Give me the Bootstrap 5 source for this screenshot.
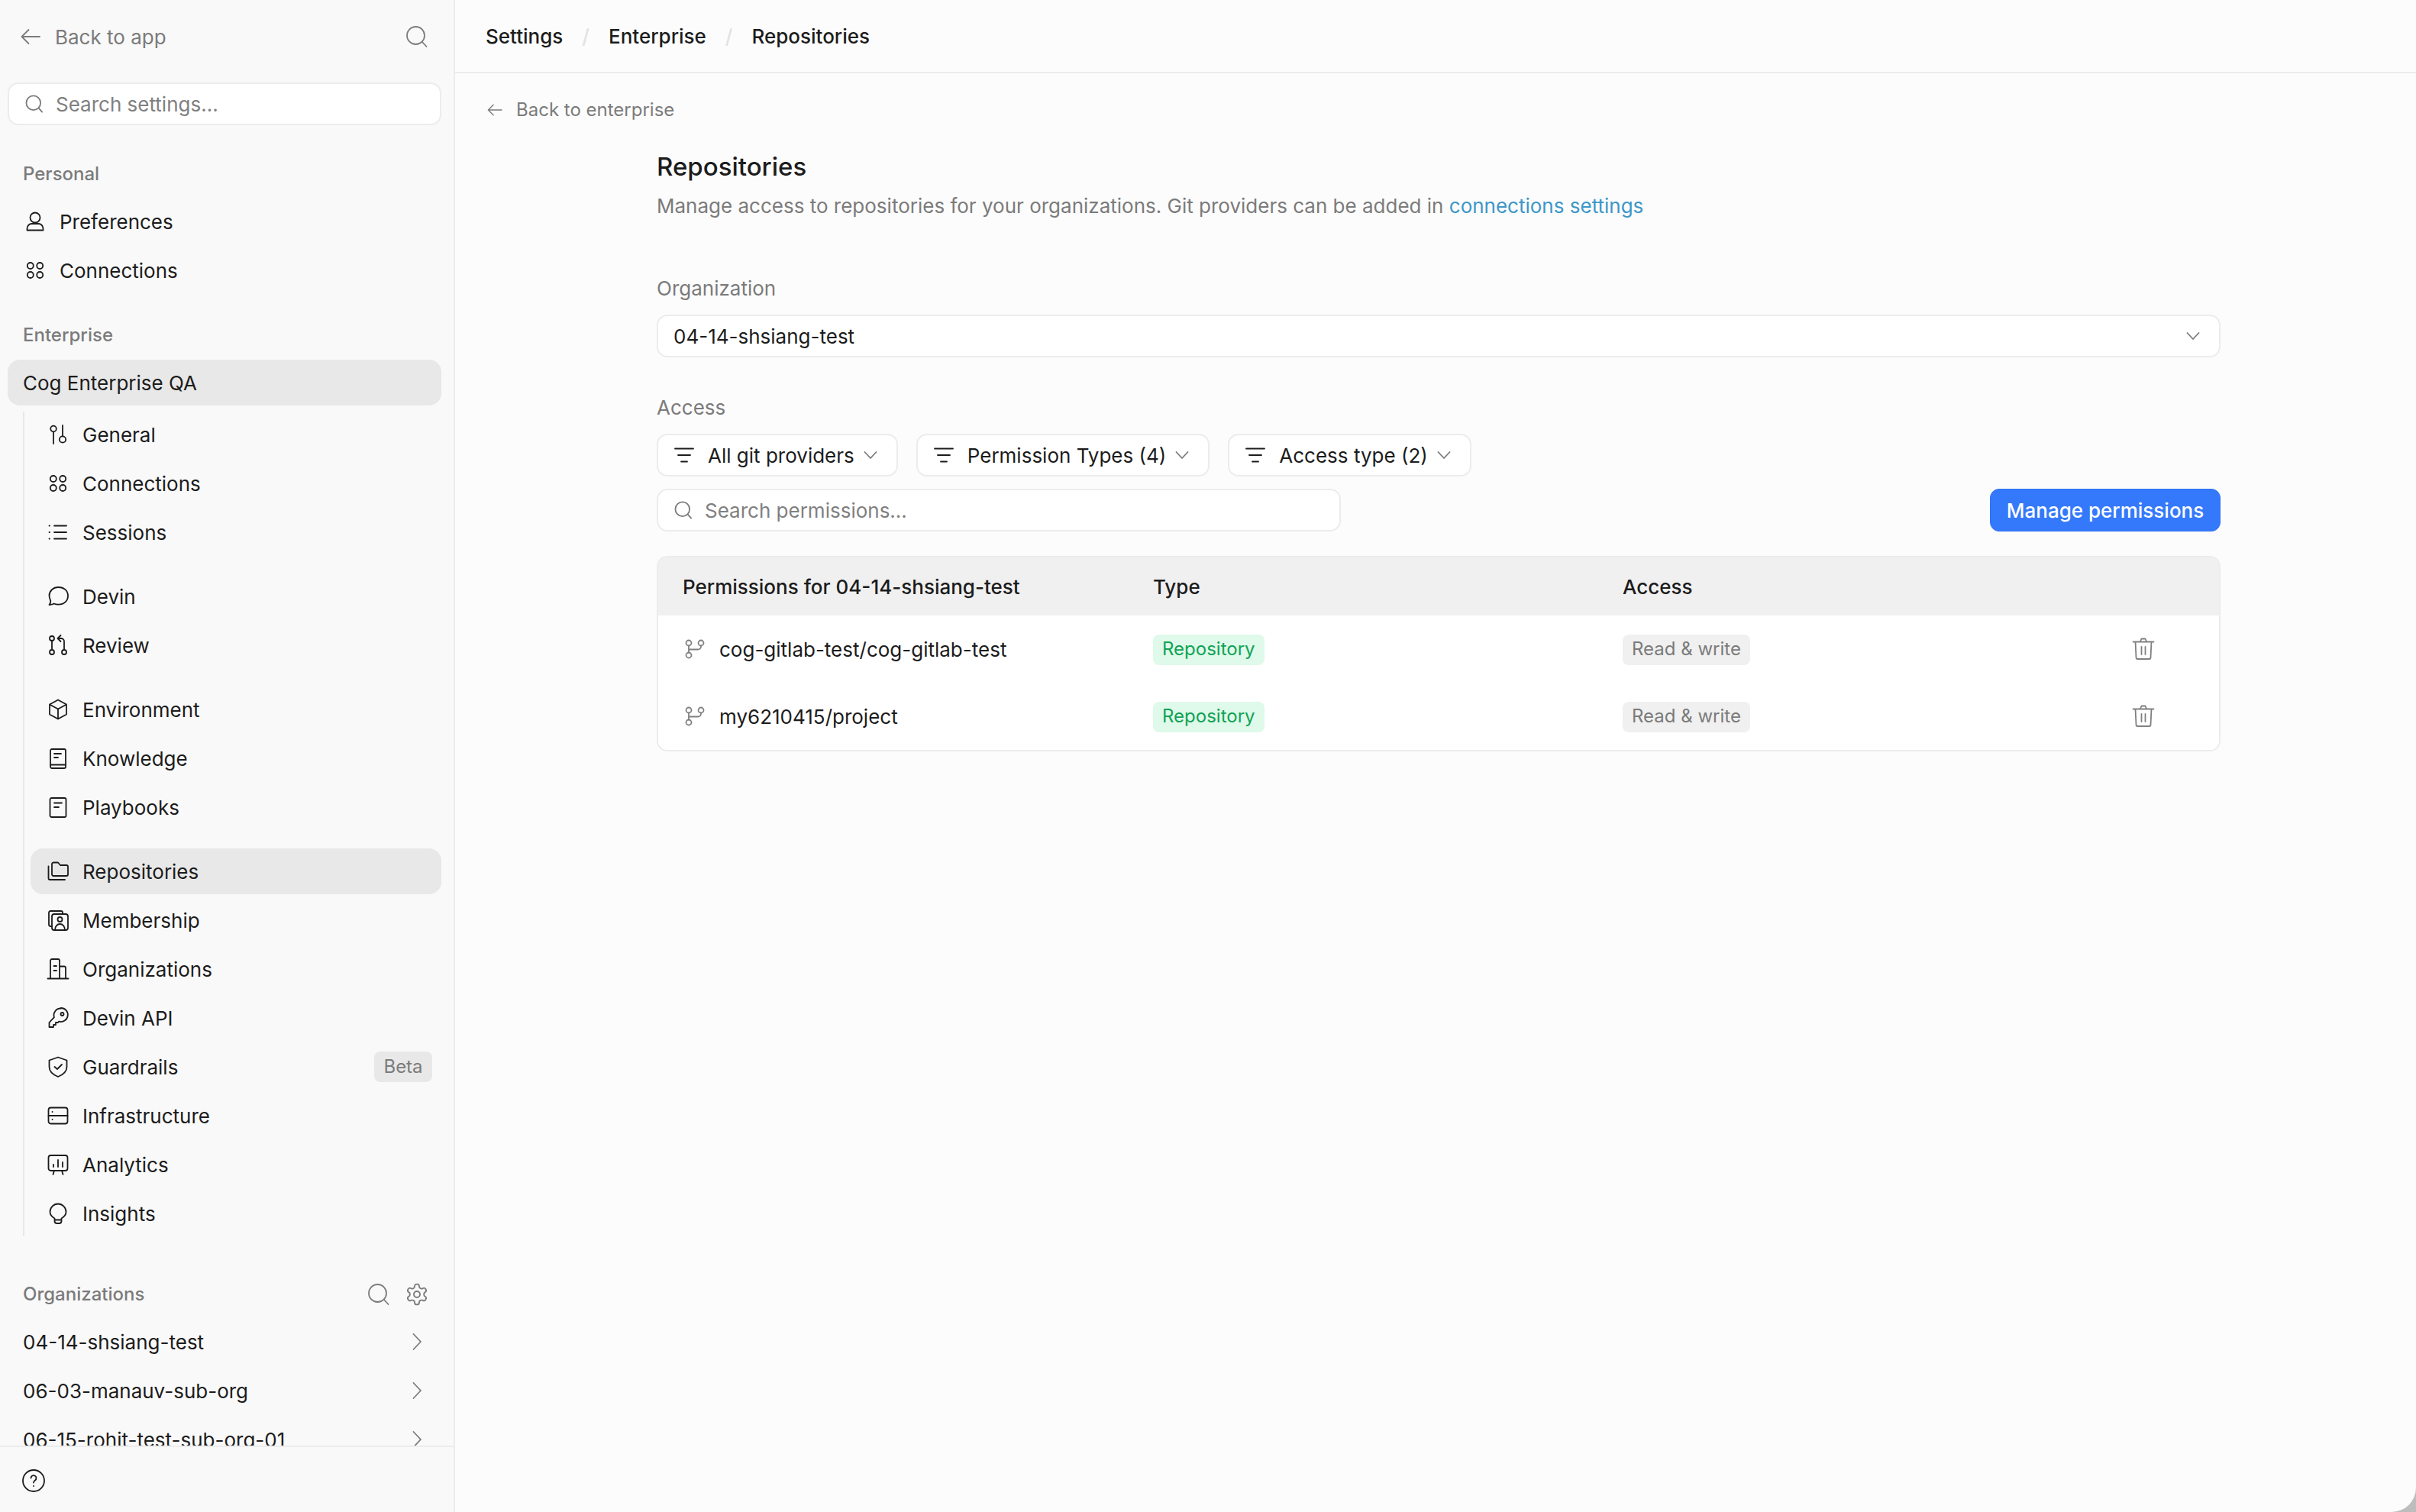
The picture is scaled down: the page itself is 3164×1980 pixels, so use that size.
<!DOCTYPE html>
<html lang="en">
<head>
<meta charset="UTF-8">
<title>Repositories</title>
<link href="https://cdn.jsdelivr.net/npm/bootstrap@5.3.0/dist/css/bootstrap.min.css" rel="stylesheet">
<style>
    body { height: 1980px; background: #bdbdbd; font-family: Inter, "Liberation Sans", sans-serif; font-size: 26px; color: #1c1c1c; }
    svg.ico { width: 32px; height: 32px; flex: none; fill: none; stroke: currentColor; stroke-width: 1.8; stroke-linecap: round; stroke-linejoin: round; }
    svg.ico-sm { width: 24px; height: 24px; }
    svg.ico-find { width: 26px; height: 26px; stroke-width: 2.2; }

    .side-panel { width: 596px; flex: none; background: #f9f9f9; border-right: 2px solid #ececec; }
    .side-scroll { height: 1893px; padding-top: 24px; }
    .side-top { height: 48px; padding: 0 32px 0 24px; color: #7b7b7b; }
    .side-top a { color: #7b7b7b; text-decoration: none; }
    .side-search { margin: 36px 16px 44px 10px; height: 56px; }
    .side-label { height: 40px; padding: 0 32px 0 30px; color: #7b7b7b; font-size: 24px; font-weight: 500; margin-bottom: 12px; }
    .side-item { height: 60px; margin-bottom: 4px; padding-left: 20px; border-radius: 16px; color: #1c1c1c; text-decoration: none; gap: 16px; }
    .side-item.on { background: #e8e8e8; }
    .side-first { margin: 0 16px 35px 10px; }
    .side-first.cog-row { margin-bottom: 0; }
    .side-first.cog-row .side-item { margin-bottom: 8px; }
    .side-nest { margin: 0 16px 56px 30px; border-left: 2px solid #e8e8e8; padding-left: 8px; }
    .side-nest .side-item:last-child { margin-bottom: 0; }
    .group-gap { margin-top: 24px; }
    .beta-tag { margin: 0 12px 0 auto; width: 76px; height: 40px; border-radius: 8px; background: #e8e8e8; color: #7b7b7b; font-size: 24px; }
    .org-tools { gap: 18px; color: #7b7b7b; }
    .org-row { height: 60px; margin-bottom: 4px; padding: 0 32px 0 30px; }
    .org-row svg { color: #7b7b7b; }
    .side-foot { height: 87px; border-top: 2px solid #ececec; padding: 2px 0 0 28px; }

    .main-panel { background: #fcfcfc; border-bottom-right-radius: 32px; min-width: 0; }
    .crumb-bar { height: 96px; padding-left: 40px; border-bottom: 2px solid #ececec; }
    .crumb-bar .breadcrumb { --bs-breadcrumb-margin-bottom: 0; --bs-breadcrumb-item-padding-x: 25px; --bs-breadcrumb-divider-color: #e2e2e2; }
    .crumb-bar .breadcrumb-item, .crumb-bar .breadcrumb-item.active { color: #1c1c1c; font-weight: 500; }
    .back-link { height: 96px; padding-left: 40px; margin-bottom: 2px; gap: 16px; color: #7b7b7b; font-size: 24px; text-decoration: none; }
    .page-body { margin-left: 264px; width: 2048px; }
    .page-title { font-size: 33px; font-weight: 500; line-height: 48px; margin: 0; }
    .page-sub { color: #7b7b7b; line-height: 40px; margin: 8px 0 68px; }
    .page-sub a { color: #3d97c9; text-decoration: none; }
    .field-label { color: #7b7b7b; line-height: 40px; margin-bottom: 14px; }
    .btn.box-btn { height: 56px; background: #fff; border: 2px solid #ececec; border-radius: 14px; color: #1c1c1c; font-size: 26px; padding: 0 22px 0 18px; }
    .btn.box-btn svg.ico-sm { color: #7b7b7b; }
    .org-pick { padding: 0 22px 0 20px !important; margin-bottom: 46px; }
    .filter-row { gap: 24px; margin-bottom: 16px; }
    .filter-btn { gap: 9px; }
    .filter-btn .btn-txt { margin-left: 6px; }
    .search-box { height: 56px; width: 896px; background: #fff; border: 2px solid #ececec; border-radius: 14px; padding-left: 20px; gap: 15px; color: #7b7b7b; }
    .search-box.side-search { width: auto; }
    .search-box .form-control { padding: 0; background: transparent; border: 0; box-shadow: none; font-size: 26px; color: #1c1c1c; }
    .form-control::placeholder { color: #808080; opacity: 1; }
    .btn.manage-btn { height: 56px; width: 302px; padding: 0; border-radius: 12px; font-size: 26px; font-weight: 500; --bs-btn-bg: #3479fb; --bs-btn-border-color: #2f72f0; }
    .perm-wrap { margin-top: 32px; border: 2px solid #ececec; border-radius: 14px; overflow: hidden; }
    .perm-table { table-layout: fixed; margin: 0; --bs-table-color: #1c1c1c; font-size: 26px; }
    .perm-table th { height: 76px; background: #f0f0f0; font-weight: 500; padding: 0; border: 0; vertical-align: middle; }
    .perm-table td { height: 88px; background: #fff; padding: 0; border: 0; vertical-align: middle; }
    .perm-table .first { padding-left: 32px; }
    .repo-name { gap: 16px; }
    .repo-name svg, .trash-ico { color: #808080; }
    .tag-chip { display: inline-block; height: 40px; line-height: 38px; padding: 0 12px; border-radius: 8px; font-size: 24px; }
    .tag-green { background: #dff9ea; color: #10a355; }
    .tag-gray { background: #f0f0f0; color: #7b7b7b; }
</style>
</head>
<body class="d-flex overflow-hidden">

<svg width="0" height="0" class="position-absolute">
    <defs>
        <symbol id="i-back" viewBox="0 0 32 32"><path d="M28 16H5M13.500 7 4.500 16l9 9"/></symbol>
        <symbol id="i-search" viewBox="0 0 32 32"><circle cx="14.500" cy="14.500" r="11.500"/><path d="M23 23l5.500 6"/></symbol>
        <symbol id="i-user" viewBox="0 0 32 32"><circle cx="16" cy="11" r="6.500"/><path d="M5.500 27.500h21v-2c0-4-3-6.500-6-6.500h-9c-3 0-6 2.500-6 6.500z"/></symbol>
        <symbol id="i-apps" viewBox="0 0 32 32"><circle cx="9.800" cy="10" r="4"/><circle cx="22.200" cy="10" r="4"/><circle cx="9.800" cy="22" r="4"/><circle cx="22.200" cy="22" r="4"/></symbol>
        <symbol id="i-sliders" viewBox="0 0 32 32"><circle cx="10" cy="8.500" r="3.800"/><path d="M10 12.300V28M22 4v14"/><circle cx="22" cy="22.500" r="4.200"/></symbol>
        <symbol id="i-list" viewBox="0 0 32 32"><path d="M11 7.500h16M11 16h16M11 24.500h16M4.500 7.500h.5M4.500 16h.5M4.500 24.500h.5"/></symbol>
        <symbol id="i-chat" viewBox="0 0 32 32"><path d="M16.500 4C9.500 4 4.500 9 4.500 15c0 2.800 1 5 1.700 6.500.3 1-.7 4-1.700 5.500 3-.2 5-.7 6.200-1.500 1.500.7 3.300 1.200 5.800 1.200 7.500 0 12.500-5 12.500-11.500S24 4 16.500 4z"/></symbol>
        <symbol id="i-pull" viewBox="0 0 32 32"><circle cx="8" cy="7" r="3"/><path d="M8 10v12"/><circle cx="8" cy="25" r="3"/><circle cx="24" cy="25" r="3"/><path d="M24 22V11a4 4 0 0 0-4-4h-3M19.500 3 15.500 7l4 4"/></symbol>
        <symbol id="i-cube" viewBox="0 0 32 32"><path d="M16 3.500 27 9.500v13l-11 6-11-6v-13zM5 9.500l11 6 11-6M16 15.500v13"/></symbol>
        <symbol id="i-book" viewBox="0 0 32 32"><rect x="6" y="4" width="20" height="25" rx="2"/><path d="M6 24.500h20M11 10h9M11 15h5"/></symbol>
        <symbol id="i-note" viewBox="0 0 32 32"><rect x="5.500" y="4" width="21" height="25" rx="2"/><path d="M11 10.500h10M11 16h6"/></symbol>
        <symbol id="i-folder" viewBox="0 0 32 32"><path d="M10 4.500h6l3 3.500h8a2 2 0 0 1 2 2v10a2 2 0 0 1-2 2H10a2 2 0 0 1-2-2V6.500a2 2 0 0 1 2-2z"/><path d="M3.500 9.500V25a2 2 0 0 0 2 2H25"/></symbol>
        <symbol id="i-member" viewBox="0 0 32 32"><path d="M8 24H6a2 2 0 0 1-2-2V6a2 2 0 0 1 2-2h14a2 2 0 0 1 2 2v2"/><rect x="8" y="8" width="21" height="21" rx="3"/><circle cx="18.500" cy="15" r="3"/><path d="M12 29c0-5 3-8 6.500-8s6.500 3 6.500 8"/></symbol>
        <symbol id="i-office" viewBox="0 0 32 32"><path d="M2.500 28.500h27M6 28.500V5a2 2 0 0 1 2-2h8a2 2 0 0 1 2 2v23.500M18 12.500h6a2 2 0 0 1 2 2v14M10.500 12h3.500M10.500 18h3.500"/></symbol>
        <symbol id="i-key" viewBox="0 0 32 32"><path d="M19.500 3.500a9 9 0 0 0-8.600 11.700L4.500 22v6h5.500v-3h3v-3h3l1.200-1.400a9 9 0 1 0 2.300-17.600z"/><circle cx="21.500" cy="11" r="2"/></symbol>
        <symbol id="i-shield" viewBox="0 0 32 32"><path d="M16 3.500 27.500 7.500V16c0 6-4 10-11.500 13-7.500-3-11.500-7-11.500-13V7.500z"/><path d="M11.500 16l3.500 3 6-6"/></symbol>
        <symbol id="i-server" viewBox="0 0 32 32"><rect x="3.500" y="5.500" width="25" height="21" rx="3"/><path d="M3.500 16h25M8.500 11h.1M8.500 21h.1"/></symbol>
        <symbol id="i-board" viewBox="0 0 32 32"><rect x="3.500" y="4" width="25" height="20" rx="3"/><path d="M10 16v3M16 10v9M22 13v6M11 24l-1.500 5M21 24l1.500 5"/></symbol>
        <symbol id="i-bulb" viewBox="0 0 32 32"><path d="M11.500 22.500C8 20.500 5.500 17.500 5.500 14a10.500 10.500 0 0 1 21 0c0 3.500-2.500 6.500-6 8.500V26a3 3 0 0 1-3 3h-3a3 3 0 0 1-3-3zM11.500 24.500h9"/></symbol>
        <symbol id="i-right" viewBox="0 0 32 32"><path d="M11.500 6 21 16l-9.500 10"/></symbol>
        <symbol id="i-gear" viewBox="0 0 24 24"><path stroke-width="1.400" d="M12.220 2h-.44a2 2 0 0 0-2 2v.18a2 2 0 0 1-1 1.730l-.43.250a2 2 0 0 1-2 0l-.15-.08a2 2 0 0 0-2.730.730l-.22.380a2 2 0 0 0 .730 2.730l.15.100a2 2 0 0 1 1 1.720v.510a2 2 0 0 1-1 1.740l-.15.090a2 2 0 0 0-.730 2.730l.22.380a2 2 0 0 0 2.730.730l.15-.08a2 2 0 0 1 2 0l.43.250a2 2 0 0 1 1 1.730V20a2 2 0 0 0 2 2h.44a2 2 0 0 0 2-2v-.18a2 2 0 0 1 1-1.730l.43-.25a2 2 0 0 1 2 0l.15.080a2 2 0 0 0 2.730-.730l.22-.39a2 2 0 0 0-.730-2.730l-.15-.08a2 2 0 0 1-1-1.740v-.5a2 2 0 0 1 1-1.740l.15-.09a2 2 0 0 0 .730-2.730l-.22-.38a2 2 0 0 0-2.730-.730l-.15.080a2 2 0 0 1-2 0l-.43-.25a2 2 0 0 1-1-1.730V4a2 2 0 0 0-2-2z"/><circle stroke-width="1.400" cx="12" cy="12" r="3"/></symbol>
        <symbol id="i-help" viewBox="0 0 32 32"><circle cx="16" cy="16" r="14"/><path d="M12.500 12.500a3.500 3.500 0 1 1 5.500 3c-1.200.8-2 1.500-2 3M16 23h.1"/></symbol>
        <symbol id="i-filter" viewBox="0 0 32 32"><path d="M4 7.500h24M8 16h16M12 24.500h8"/></symbol>
        <symbol id="i-down" viewBox="0 0 24 24"><path d="M4.500 8 12 16l7.500-8"/></symbol>
        <symbol id="i-branch" viewBox="0 0 32 32"><circle cx="8" cy="8" r="3.500"/><circle cx="24" cy="8" r="3.500"/><circle cx="8" cy="24" r="3.500"/><path d="M8 11.500v9M8 16.500h12a4 4 0 0 0 4-4v-1"/></symbol>
        <symbol id="i-trash" viewBox="0 0 32 32"><path d="M12 6l1.500-3.500h5L20 6M2.500 6.500h27M5.500 6.500l1 20.500a2 2 0 0 0 2 2h15a2 2 0 0 0 2-2l1-20.500M13.500 13v10M18.500 13v10"/></symbol>
    </defs>
</svg>

<aside class="side-panel d-flex flex-column">
    <div class="side-scroll overflow-hidden">
        <div class="side-top d-flex align-items-center justify-content-between">
            <a href="#" class="d-flex align-items-center gap-3"><svg class="ico"><use href="#i-back"/></svg>Back to app</a>
            <svg class="ico"><use href="#i-search"/></svg>
        </div>
        <div class="search-box side-search d-flex align-items-center">
            <svg class="ico ico-find"><use href="#i-search"/></svg>
            <input type="text" class="form-control" placeholder="Search settings...">
        </div>

        <div class="side-label d-flex align-items-center">Personal</div>
        <div class="side-first">
            <a href="#" class="side-item d-flex align-items-center"><svg class="ico"><use href="#i-user"/></svg>Preferences</a>
            <a href="#" class="side-item d-flex align-items-center"><svg class="ico"><use href="#i-apps"/></svg>Connections</a>
        </div>

        <div class="side-label d-flex align-items-center">Enterprise</div>
        <div class="side-first cog-row">
            <a href="#" class="side-item on d-flex align-items-center">Cog Enterprise QA</a>
        </div>
        <div class="side-nest">
            <a href="#" class="side-item d-flex align-items-center"><svg class="ico"><use href="#i-sliders"/></svg>General</a>
            <a href="#" class="side-item d-flex align-items-center"><svg class="ico"><use href="#i-apps"/></svg>Connections</a>
            <a href="#" class="side-item d-flex align-items-center"><svg class="ico"><use href="#i-list"/></svg>Sessions</a>
            <a href="#" class="side-item d-flex align-items-center group-gap"><svg class="ico"><use href="#i-chat"/></svg>Devin</a>
            <a href="#" class="side-item d-flex align-items-center"><svg class="ico"><use href="#i-pull"/></svg>Review</a>
            <a href="#" class="side-item d-flex align-items-center group-gap"><svg class="ico"><use href="#i-cube"/></svg>Environment</a>
            <a href="#" class="side-item d-flex align-items-center"><svg class="ico"><use href="#i-book"/></svg>Knowledge</a>
            <a href="#" class="side-item d-flex align-items-center"><svg class="ico"><use href="#i-note"/></svg>Playbooks</a>
            <a href="#" class="side-item on d-flex align-items-center group-gap"><svg class="ico"><use href="#i-folder"/></svg>Repositories</a>
            <a href="#" class="side-item d-flex align-items-center"><svg class="ico"><use href="#i-member"/></svg>Membership</a>
            <a href="#" class="side-item d-flex align-items-center"><svg class="ico"><use href="#i-office"/></svg>Organizations</a>
            <a href="#" class="side-item d-flex align-items-center"><svg class="ico"><use href="#i-key"/></svg>Devin API</a>
            <a href="#" class="side-item d-flex align-items-center"><svg class="ico"><use href="#i-shield"/></svg>Guardrails<span class="beta-tag d-flex align-items-center justify-content-center">Beta</span></a>
            <a href="#" class="side-item d-flex align-items-center"><svg class="ico"><use href="#i-server"/></svg>Infrastructure</a>
            <a href="#" class="side-item d-flex align-items-center"><svg class="ico"><use href="#i-board"/></svg>Analytics</a>
            <a href="#" class="side-item d-flex align-items-center"><svg class="ico"><use href="#i-bulb"/></svg>Insights</a>
        </div>

        <div class="side-label d-flex align-items-center justify-content-between">
            <span>Organizations</span>
            <span class="d-flex org-tools">
                <svg class="ico"><use href="#i-search"/></svg>
                <svg class="ico"><use href="#i-gear"/></svg>
            </span>
        </div>
        <div class="org-row d-flex align-items-center justify-content-between">04-14-shsiang-test<svg class="ico"><use href="#i-right"/></svg></div>
        <div class="org-row d-flex align-items-center justify-content-between">06-03-manauv-sub-org<svg class="ico"><use href="#i-right"/></svg></div>
        <div class="org-row d-flex align-items-center justify-content-between">06-15-rohit-test-sub-org-01<svg class="ico"><use href="#i-right"/></svg></div>
    </div>
    <div class="side-foot d-flex align-items-center"><svg class="ico"><use href="#i-help"/></svg></div>
</aside>

<main class="main-panel flex-grow-1">
    <div class="crumb-bar d-flex align-items-center">
        <nav aria-label="breadcrumb">
            <ol class="breadcrumb">
                <li class="breadcrumb-item">Settings</li>
                <li class="breadcrumb-item">Enterprise</li>
                <li class="breadcrumb-item active" aria-current="page">Repositories</li>
            </ol>
        </nav>
    </div>
    <a href="#" class="back-link d-flex align-items-center"><svg class="ico ico-sm"><use href="#i-back"/></svg>Back to enterprise</a>

    <div class="page-body">
        <h1 class="page-title">Repositories</h1>
        <p class="page-sub">Manage access to repositories for your organizations. Git providers can be added in <a href="#">connections settings</a></p>

        <div class="field-label">Organization</div>
        <button type="button" class="btn box-btn org-pick w-100 d-flex align-items-center justify-content-between">04-14-shsiang-test<svg class="ico ico-sm"><use href="#i-down"/></svg></button>

        <div class="field-label">Access</div>
        <div class="d-flex filter-row">
            <button type="button" class="btn box-btn filter-btn d-flex align-items-center"><svg class="ico"><use href="#i-filter"/></svg><span class="btn-txt">All git providers</span><svg class="ico ico-sm"><use href="#i-down"/></svg></button>
            <button type="button" class="btn box-btn filter-btn d-flex align-items-center"><svg class="ico"><use href="#i-filter"/></svg><span class="btn-txt">Permission Types (4)</span><svg class="ico ico-sm"><use href="#i-down"/></svg></button>
            <button type="button" class="btn box-btn filter-btn d-flex align-items-center"><svg class="ico"><use href="#i-filter"/></svg><span class="btn-txt">Access type (2)</span><svg class="ico ico-sm"><use href="#i-down"/></svg></button>
        </div>
        <div class="d-flex justify-content-between align-items-center">
            <div class="search-box d-flex align-items-center">
                <svg class="ico ico-find"><use href="#i-search"/></svg>
                <input type="text" class="form-control" placeholder="Search permissions...">
            </div>
            <button type="button" class="btn btn-primary manage-btn">Manage permissions</button>
        </div>

        <div class="perm-wrap">
            <table class="table perm-table">
                <colgroup><col style="width:648px"><col style="width:615px"><col style="width:583px"><col></colgroup>
                <thead>
                    <tr><th class="first">Permissions for 04-14-shsiang-test</th><th>Type</th><th>Access</th><th></th></tr>
                </thead>
                <tbody>
                    <tr>
                        <td class="first"><div class="repo-name d-flex align-items-center"><svg class="ico"><use href="#i-branch"/></svg>cog-gitlab-test/cog-gitlab-test</div></td>
                        <td><span class="tag-chip tag-green">Repository</span></td>
                        <td><span class="tag-chip tag-gray">Read &amp; write</span></td>
                        <td><svg class="ico trash-ico d-block mx-auto"><use href="#i-trash"/></svg></td>
                    </tr>
                    <tr>
                        <td class="first"><div class="repo-name d-flex align-items-center"><svg class="ico"><use href="#i-branch"/></svg>my6210415/project</div></td>
                        <td><span class="tag-chip tag-green">Repository</span></td>
                        <td><span class="tag-chip tag-gray">Read &amp; write</span></td>
                        <td><svg class="ico trash-ico d-block mx-auto"><use href="#i-trash"/></svg></td>
                    </tr>
                </tbody>
            </table>
        </div>
    </div>
</main>

<script src="https://cdn.jsdelivr.net/npm/bootstrap@5.3.0/dist/js/bootstrap.bundle.min.js"></script>
</body>
</html>
